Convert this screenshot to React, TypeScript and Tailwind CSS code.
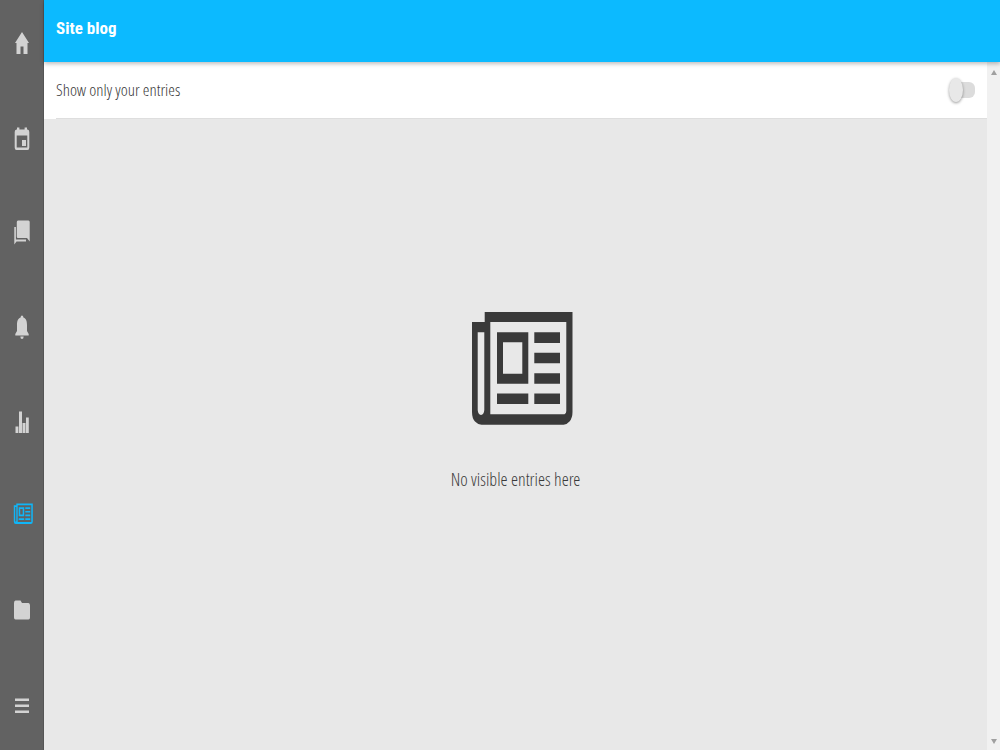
import type { ReactNode } from "react";

type NavItem = {
  id: string;
  label: string;
  icon: ReactNode;
};

// All nav icons share a 24x32 box
const navItems: NavItem[] = [
  {
    id: "home",
    label: "Site home",
    icon: <path d="M12 5 19 16H17.500V27H13.500V19.500H10.500V27H6.500V16H5Z" />,
  },
  {
    id: "calendar",
    label: "Calendar",
    icon: (
      <path
        fillRule="evenodd"
        d="M7 5.500h2.400v2h5.200v-2H17v2h.5Q19.300 7.500 19.300 10V25.500Q19.300 28 17.500 28h-11Q4.700 28 4.700 25.500V10Q4.700 7.500 6.500 7.500H7ZM6.700 13.500V25.500H17.300V13.500ZM12 18h4v6h-4Z"
      />
    ),
  },
  {
    id: "messages",
    label: "Messages",
    icon: (
      <>
        <path d="M8 4.500H18.500Q19.700 4.500 19.700 6V25.500L17 22H8Q6.800 22 6.800 20.500V6Q6.800 4.500 8 4.500Z" />
        <path d="M4.300 11H5.900V23.500H16V25.500H6.500L4.300 28.500Z" />
      </>
    ),
  },
  {
    id: "notifications",
    label: "Notifications",
    icon: (
      <path d="M12 4.500Q13.300 4.500 13.400 6.500C16.500 7.500 17 11 17 14V20L18.700 23V24.500H5.300V23L7 20V14C7 11 7.500 7.500 10.600 6.500Q10.700 4.500 12 4.500ZM10.300 25.500H13.700Q13.500 28 12 28T10.300 25.500Z" />
    ),
  },
  {
    id: "grades",
    label: "Grades",
    icon: <path d="M5.500 20.500h2.900V27H5.500ZM9 5.500h3V27H9ZM12.500 17h3v10h-3ZM16 11.500h2.800V27H16Z" />,
  },
  {
    id: "blog",
    label: "Site blog",
    icon: (
      <path
        fillRule="evenodd"
        d="M6.300 2.400H22.800V20.500Q22.800 23 20.800 23H5.700Q3.800 23 3.800 20.500V4.300H6.300ZM7.700 4.200V20.900H21.300V4.200ZM5.200 6V20Q5.700 21.300 6.300 20V6ZM8.700 6.200H14.200V15.300H8.700ZM10.200 8V13.500H12.700V8ZM15.300 6.200H20.200V8H15.300ZM15.300 9.900H20.200V11.600H15.300ZM15.300 13.600H20.200V15.300H15.300ZM15.300 17.300H20.200V19H15.300ZM8.700 17.300H14.200V19H8.700Z"
      />
    ),
  },
  {
    id: "files",
    label: "Files",
    icon: <path d="M5.500 5.500H10.500L12 8H18.500Q20 8 20 10.500V22.500Q20 24.500 18.500 24.500H5.500Q4 24.500 4 22.500V8Q4 5.500 5.500 5.500Z" />,
  },
  {
    id: "more",
    label: "More",
    icon: <path d="M5 8.500H19V11H5ZM5 14.500H19V17H5ZM5 20.500H19V23H5Z" />,
  },
];

function Sidebar({ active }: { active: string }) {
  return (
    <nav
      aria-label="Main menu"
      className="flex w-11 shrink-0 flex-col items-center justify-between border-r border-[#555555] bg-[#626262] pt-[19px] pb-5"
    >
      {navItems.map((item) => (
        <button
          key={item.id}
          type="button"
          aria-label={item.label}
          aria-current={item.id === active ? "page" : undefined}
          className={
            item.id === active
              ? "flex h-12 w-full items-center justify-center text-[#0fb6f8]"
              : "flex h-12 w-full items-center justify-center text-[#d3d3d3]"
          }
        >
          <svg viewBox="0 0 24 32" className="h-8 w-6" fill="currentColor" aria-hidden="true">
            {item.icon}
          </svg>
        </button>
      ))}
    </nav>
  );
}

function NewspaperIcon() {
  return (
    <svg
      viewBox="0 0 127 113"
      className="h-[113px] w-[127px] text-[#3a3a3a]"
      fill="currentColor"
      fillRule="evenodd"
      aria-hidden="true"
    >
      <path d="M32.700 0H120.500V100Q120.500 106 117.500 109.500T111 112.700H29.500Q26 112.700 23 109.500T20 100V10H32.700ZM38.300 10V102.300H112.500Q114.300 101.500 114.300 99V10ZM25.700 20.300V98Q26 102.500 29 103Q32 102.500 32.300 98V20.300Z" />
      <path d="M45 20.300H76.300V71.700H45ZM51 30.300V61.700H70.300V30.300ZM45 81.500H76.300V92H45Z" />
      <path d="M82.300 20.300H108V31H82.300ZM82.300 40.700H108V51.300H82.300ZM82.300 61.300H108V71.700H82.300ZM82.300 81.500H108V92H82.300Z" />
    </svg>
  );
}

function ScrollTrack() {
  return (
    <div aria-hidden="true" className="flex w-[13px] shrink-0 flex-col items-center justify-between bg-[#f1f1f1] pt-2 pb-1.5">
      <svg viewBox="0 0 6 5" className="h-[5px] w-1.5" fill="#a0a0a0">
        <path d="M3 0 6 5H0Z" />
      </svg>
      <svg viewBox="0 0 6 5" className="h-[5px] w-1.5" fill="#a0a0a0">
        <path d="M0 0H6L3 5Z" />
      </svg>
    </div>
  );
}

export default function App() {
  return (
    <div className="flex min-h-screen bg-[#e8e8e8] font-['Open_Sans_Condensed_Light','Open_Sans_Condensed','Open_Sans',sans-serif] text-[#3a3a3a]">
      <Sidebar active="blog" />

      <div className="flex min-w-0 flex-1 flex-col">
        <header className="z-10 flex h-[62px] items-center bg-[#0cbaff] px-3 pb-1 shadow-[0_2px_4px_rgba(0,0,0,0.25)]">
          <h1 className="font-['Roboto_Condensed','Roboto',sans-serif] text-[17px] font-bold text-white">Site blog</h1>
        </header>

        <div className="flex flex-1">
          <main className="flex min-w-0 flex-1 flex-col">
            {/* Filter row, its divider starts at the text */}
            <div className="bg-white pl-3">
              <label className="flex h-[57px] items-center justify-between border-b border-[#dedede] pr-3">
                <span className="text-[17px] leading-7 font-light">Show only your entries</span>
                <input
                  type="checkbox"
                  role="switch"
                  className="relative h-6 w-[26px] appearance-none before:absolute before:inset-y-1 before:right-0 before:left-1 before:rounded-md before:bg-[#dcdcdc] after:absolute after:inset-y-0 after:left-0 after:w-3.5 after:rounded-[50%] after:bg-[#e8e8e8] after:shadow-[0_1px_3px_rgba(0,0,0,0.4)] checked:after:left-3"
                />
              </label>
            </div>

            {/* Empty state */}
            <div className="flex flex-1 flex-col items-center justify-center gap-10 pb-16">
              <NewspaperIcon />
              <p className="text-lg leading-7 font-light">No visible entries here</p>
            </div>
          </main>
          <ScrollTrack />
        </div>
      </div>
    </div>
  );
}
